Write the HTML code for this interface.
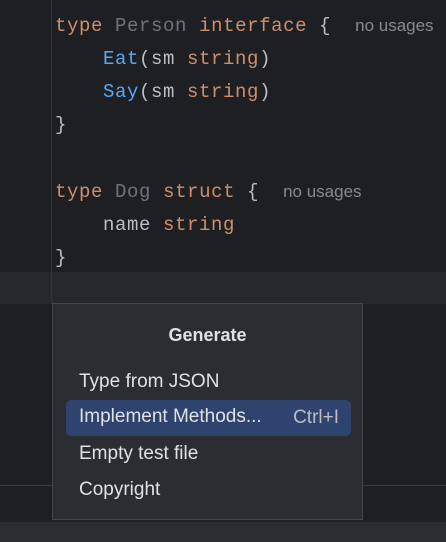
<!DOCTYPE html>
<html><head><style>
html,body{margin:0;padding:0}
body{width:446px;height:542px;background:#1e1f22;position:relative;overflow:hidden;font-family:"Liberation Sans",sans-serif}
.gut{position:absolute;left:51px;top:0;width:1px;height:304px;background:#313438}
.cur{position:absolute;left:0;top:272px;width:446px;height:32px;background:#26282e}
.sep{position:absolute;left:0;top:485px;width:446px;height:1px;background:#393b40}
.bot{position:absolute;left:0;top:522px;width:446px;height:20px;background:#2b2d30}
.code{position:absolute;left:55px;top:9px;font-family:"Liberation Mono",monospace;font-size:19px;letter-spacing:0.6px;line-height:33px;color:#bcbec4;white-space:pre}
.k{color:#cf8e6d}.g{color:#6f737a}.b{color:#56a8f5}
.h{font-family:"Liberation Sans",sans-serif;font-size:17px;letter-spacing:0;color:#868a91}
.pop{position:absolute;left:52px;top:303px;width:309px;height:215px;background:#2b2d30;border:1px solid #43454a}
.title{position:absolute;left:0;width:100%;top:21px;text-align:center;font-weight:bold;font-size:18px;color:#dfe1e5}
.it{position:absolute;left:26px;font-size:19px;color:#dfe1e5}
.sel{position:absolute;left:13px;top:96px;width:285px;height:36px;background:#2e436e;border-radius:5px}
.sc{position:absolute;right:12px;top:7px;font-size:19px;color:#bcbec4}
</style></head><body>
<div class="cur"></div>
<div class="gut"></div>
<div class="sep"></div>
<div class="bot"></div>
<div class="code"><span class="k">type</span> <span class="g">Person</span> <span class="k">interface</span> {  <span class="h">no usages</span>
    <span class="b">Eat</span>(sm <span class="k">string</span>)
    <span class="b">Say</span>(sm <span class="k">string</span>)
}

<span class="k">type</span> <span class="g">Dog</span> <span class="k">struct</span> {  <span class="h">no usages</span>
    name <span class="k">string</span>
}</div>
<div class="pop">
<div class="title">Generate</div>
<div class="it" style="top:67px">Type from JSON</div>
<div class="sel"><div class="it" style="left:13px;top:6px">Implement Methods...</div><div class="sc">Ctrl+I</div></div>
<div class="it" style="top:139px">Empty test file</div>
<div class="it" style="top:175px">Copyright</div>
</div>
</body></html>
